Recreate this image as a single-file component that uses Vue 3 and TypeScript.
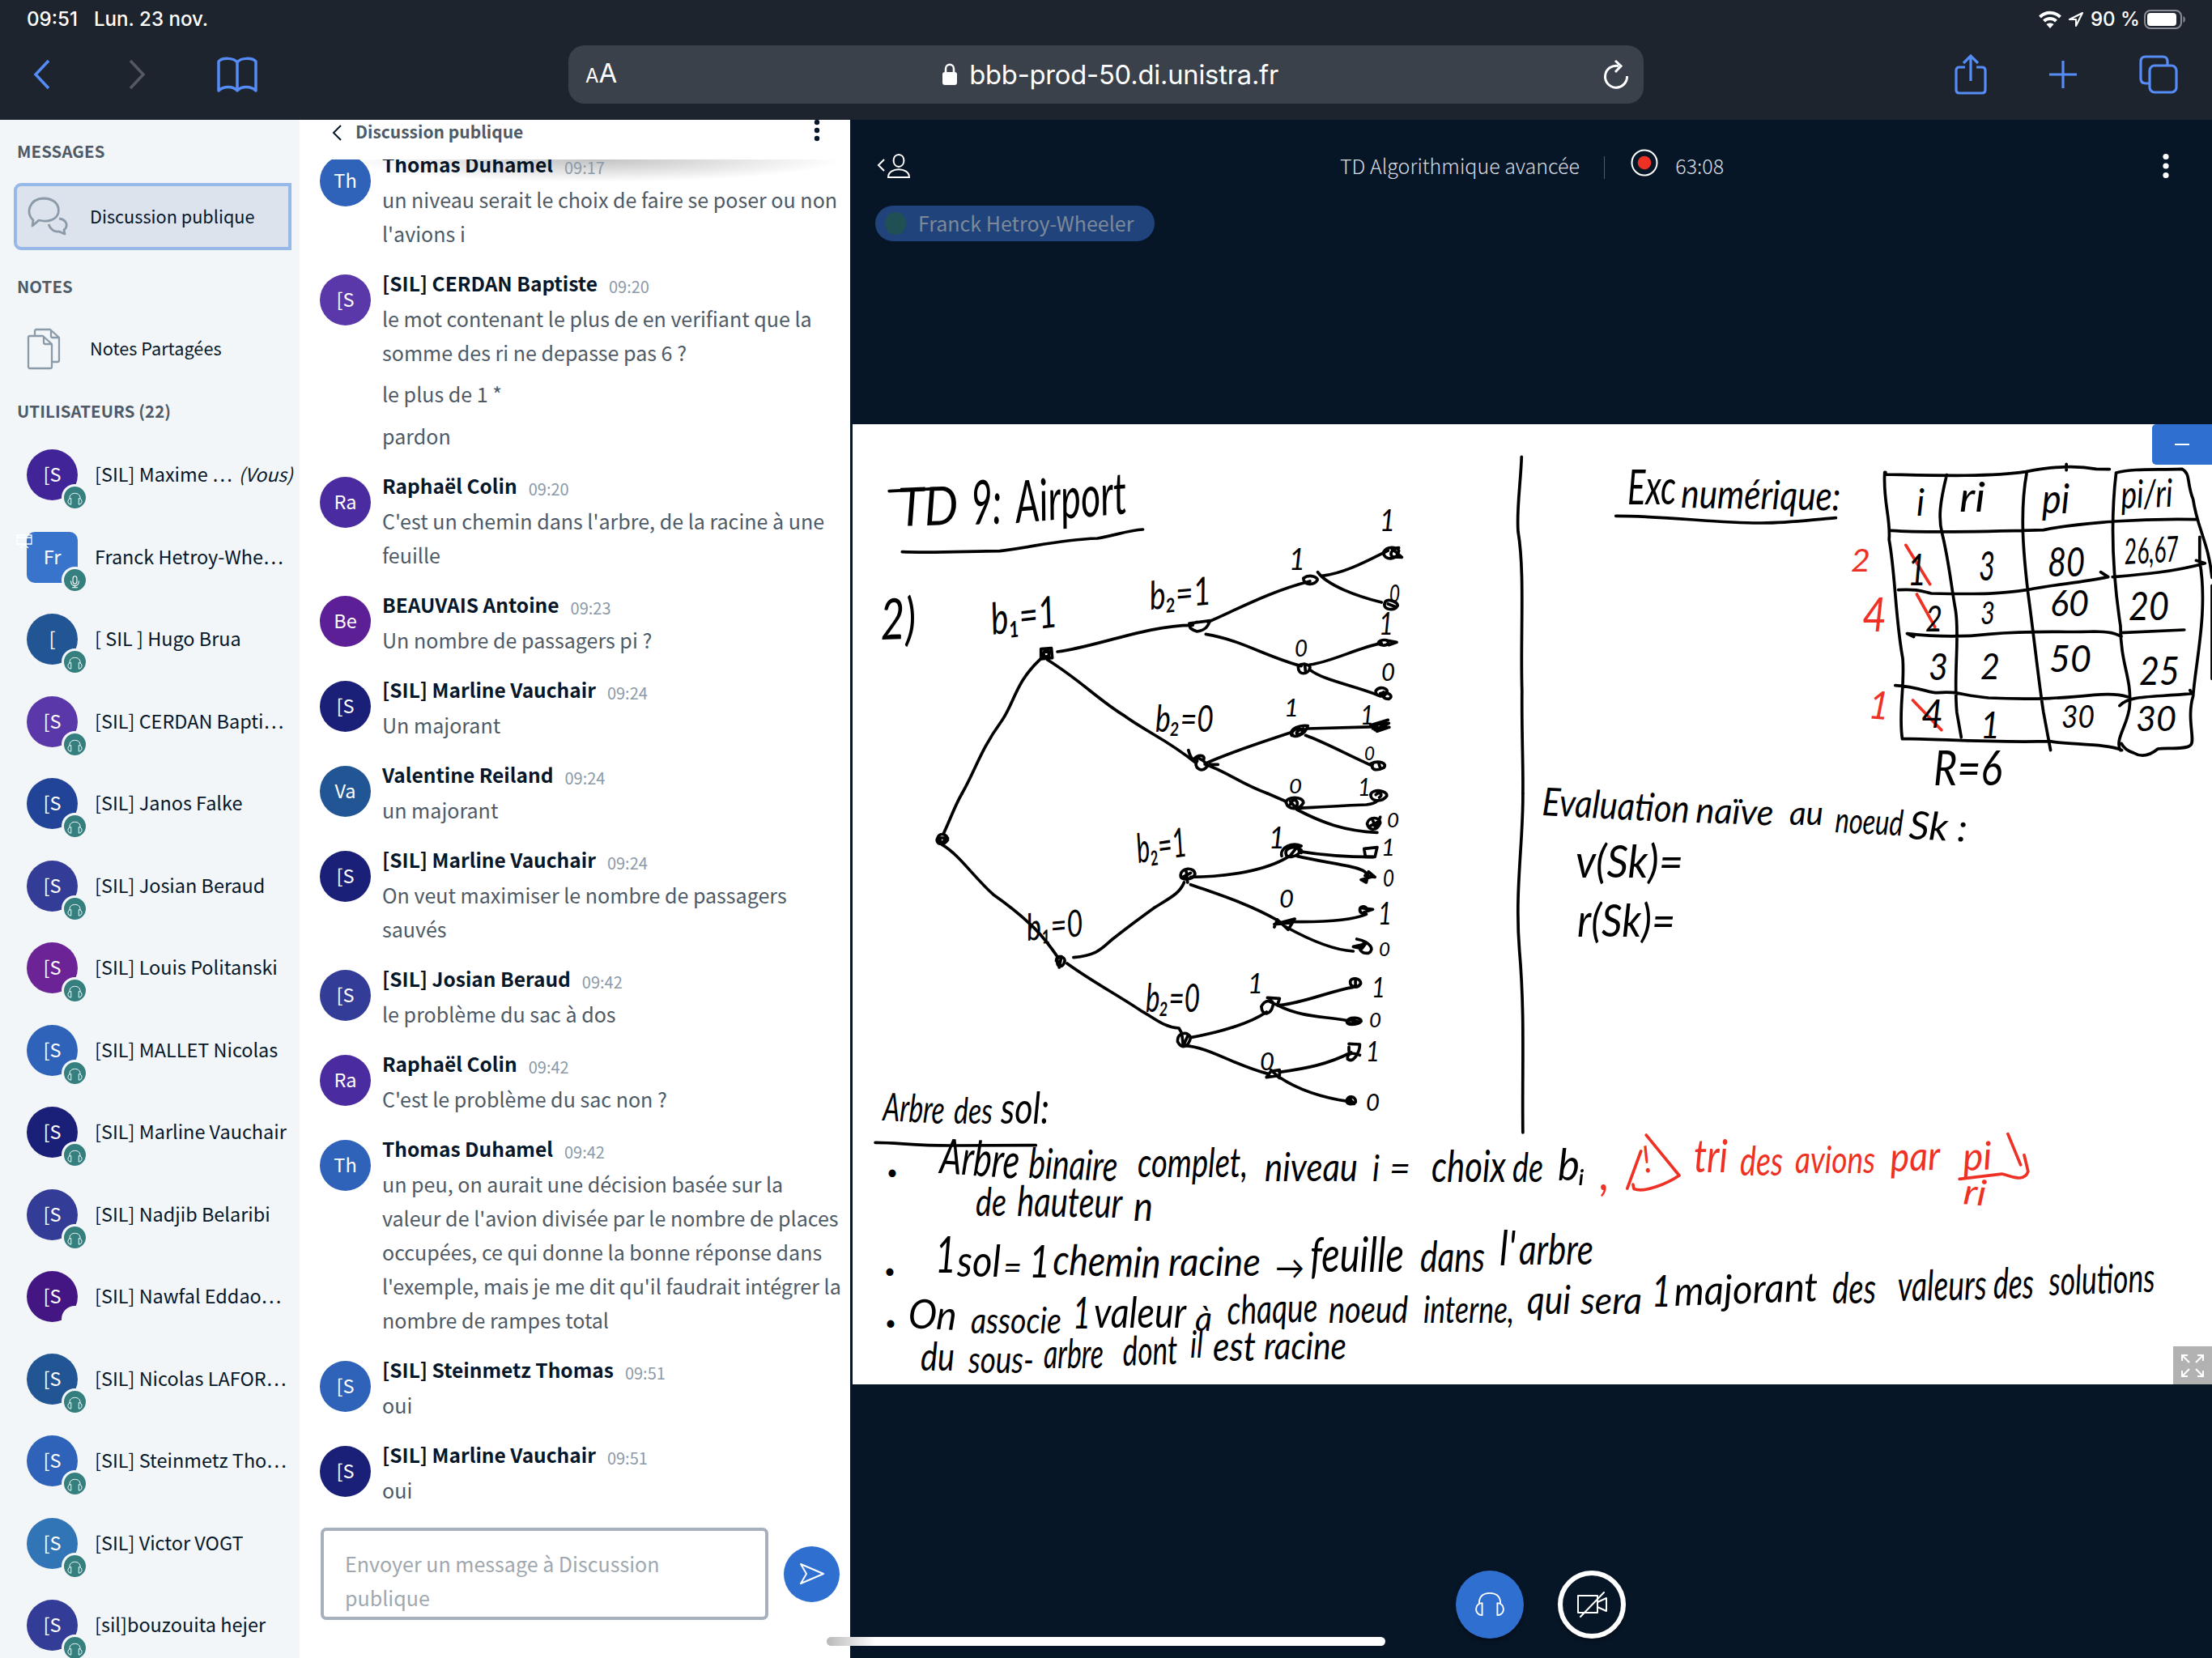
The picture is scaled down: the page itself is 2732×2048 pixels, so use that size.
<script setup lang="ts">
interface User { initials: string; name: string; color: string; badge: 'phones' | 'mic' | 'none'; you?: boolean; presenter?: boolean }
interface Message { initials: string; name: string; time: string; color: string; paragraphs: string[][] }
interface Note { t: string; x: number; y: number; w: number; s: number; r?: number; red?: boolean }

const users: User[] = [
  { initials: '[S', name: '[SIL] Maxime …', color: '#412598', badge: 'phones', you: true },
  { initials: 'Fr', name: 'Franck Hetroy-Whe…', color: '#3874cb', badge: 'mic', presenter: true },
  { initials: '[', name: '[ SIL ] Hugo Brua', color: '#225594', badge: 'phones' },
  { initials: '[S', name: '[SIL] CERDAN Bapti…', color: '#5a38a9', badge: 'phones' },
  { initials: '[S', name: '[SIL] Janos Falke', color: '#214498', badge: 'phones' },
  { initials: '[S', name: '[SIL] Josian Beraud', color: '#333c96', badge: 'phones' },
  { initials: '[S', name: '[SIL] Louis Politanski', color: '#6b2396', badge: 'phones' },
  { initials: '[S', name: '[SIL] MALLET Nicolas', color: '#2e63b9', badge: 'phones' },
  { initials: '[S', name: '[SIL] Marline Vauchair', color: '#1a2078', badge: 'phones' },
  { initials: '[S', name: '[SIL] Nadjib Belaribi', color: '#333c96', badge: 'phones' },
  { initials: '[S', name: '[SIL] Nawfal Eddao…', color: '#431684', badge: 'none' },
  { initials: '[S', name: '[SIL] Nicolas LAFOR…', color: '#225594', badge: 'phones' },
  { initials: '[S', name: '[SIL] Steinmetz Tho…', color: '#2e63b9', badge: 'phones' },
  { initials: '[S', name: '[SIL] Victor VOGT', color: '#3275b6', badge: 'phones' },
  { initials: '[S', name: '[sil]bouzouita hejer', color: '#333c96', badge: 'phones' },
]

const messages: Message[] = [
  { initials: 'Th', name: 'Thomas Duhamel', time: '09:17', color: '#2e63b9', paragraphs: [['un niveau serait le choix de faire se poser ou non', "l'avions i"]] },
  { initials: '[S', name: '[SIL] CERDAN Baptiste', time: '09:20', color: '#5a38a9', paragraphs: [['le mot contenant le plus de en verifiant que la', 'somme des ri ne depasse pas 6 ?'], ['le plus de 1 *'], ['pardon']] },
  { initials: 'Ra', name: 'Raphaël Colin', time: '09:20', color: '#4b2ca0', paragraphs: [["C'est un chemin dans l'arbre, de la racine à une", 'feuille']] },
  { initials: 'Be', name: 'BEAUVAIS Antoine', time: '09:23', color: '#5d1f95', paragraphs: [['Un nombre de passagers pi ?']] },
  { initials: '[S', name: '[SIL] Marline Vauchair', time: '09:24', color: '#1a2078', paragraphs: [['Un majorant']] },
  { initials: 'Va', name: 'Valentine Reiland', time: '09:24', color: '#225594', paragraphs: [['un majorant']] },
  { initials: '[S', name: '[SIL] Marline Vauchair', time: '09:24', color: '#1a2078', paragraphs: [['On veut maximiser le nombre de passagers', 'sauvés']] },
  { initials: '[S', name: '[SIL] Josian Beraud', time: '09:42', color: '#333c96', paragraphs: [['le problème du sac à dos']] },
  { initials: 'Ra', name: 'Raphaël Colin', time: '09:42', color: '#4b2ca0', paragraphs: [["C'est le problème du sac non ?"]] },
  { initials: 'Th', name: 'Thomas Duhamel', time: '09:42', color: '#2e63b9', paragraphs: [['un peu, on aurait une décision basée sur la', "valeur de l'avion divisée par le nombre de places", 'occupées, ce qui donne la bonne réponse dans', "l'exemple, mais je me dit qu'il faudrait intégrer la", 'nombre de rampes total']] },
  { initials: '[S', name: '[SIL] Steinmetz Thomas', time: '09:51', color: '#2e63b9', paragraphs: [['oui']] },
  { initials: '[S', name: '[SIL] Marline Vauchair', time: '09:51', color: '#1a2078', paragraphs: [['oui']] },
]

// Whiteboard writing: x, baseline, width, size and tilt in board units
const n = (t: string, x: number, y: number, w: number, s: number, r = 0, red = false): Note => ({ t, x, y, w, s, r, red })
const notes: Note[] = [
  n('TD', 1110, 650, 74, 66, -2), n('9:', 1200, 648, 38, 76, -2), n('Airport', 1256, 646, 138, 72, -5),
  n('2)', 1088, 790, 44, 70, -2),
  n('b₁=1', 1226, 784, 82, 54, -7), n('b₂=1', 1421, 753, 76, 48, -5), n('b₂=0', 1427, 904, 72, 46), n('b₂=1', 1406, 1066, 62, 50, -8), n('b₁=0', 1269, 1162, 70, 46, -5), n('b₂=0', 1415, 1250, 67, 48),
  n('1', 1592, 704, 20, 36), n('0', 1599, 811, 16, 28), n('1', 1586, 885, 18, 30), n('0', 1592, 980, 16, 26),
  n('1', 1567, 1048, 20, 36), n('0', 1580, 1121, 18, 30), n('1', 1541, 1227, 19, 34), n('0', 1556, 1322, 18, 30),
  n('1', 1704, 656, 19, 36), n('0', 1716, 744, 13, 30), n('1', 1703, 784, 18, 38), n('0', 1706, 841, 17, 30), n('1', 1680, 895, 17, 32), n('0', 1685, 939, 13, 24), n('1', 1677, 983, 16, 30), n('0', 1713, 1022, 15, 26),
  n('1', 1706, 1057, 17, 28), n('0', 1708, 1095, 14, 28), n('1', 1702, 1142, 17, 38), n('0', 1703, 1181, 14, 24), n('1', 1694, 1232, 17, 34), n('0', 1691, 1269, 15, 26), n('1', 1687, 1311, 17, 34), n('0', 1687, 1372, 17, 28),
  n('Exc', 2010, 623, 60, 60), n('numérique:', 2076, 627, 197, 50, 1),
  n('i', 2367, 637, 10, 46), n('ri', 2420, 632, 32, 50), n('pi', 2522, 634, 34, 50), n('pi/ri', 2620, 628, 64, 48, -2),
  n('1', 2356, 723, 23, 54), n('3', 2444, 717, 20, 50), n('80', 2529, 712, 46, 50), n('26,67', 2624, 697, 68, 44, -3),
  n('2', 2378, 780, 21, 44), n('3', 2446, 771, 18, 38), n('60', 2532, 761, 48, 44), n('20', 2629, 766, 50, 48),
  n('3', 2382, 840, 24, 46), n('2', 2446, 839, 24, 44), n('50', 2531, 830, 52, 46), n('25', 2642, 846, 50, 48),
  n('4', 2373, 899, 27, 48), n('1', 2446, 912, 24, 46), n('30', 2546, 899, 41, 38), n('30', 2638, 903, 50, 42),
  n('2', 2286, 706, 24, 38, 0, true), n('4', 2300, 780, 30, 58, 0, true), n('1', 2307, 887, 25, 48, 5, true),
  n('R=6', 2388, 970, 85, 60),
  n('Evaluation', 1904, 1007, 182, 48, 3), n('naïve', 2094, 1016, 96, 44, 2), n('au', 2210, 1019, 42, 40), n('noeud', 2266, 1028, 84, 44, 3), n('Sk :', 2357, 1036, 72, 48, 3),
  n('v(Sk)=', 1946, 1084, 133, 56), n('r(Sk)=', 1948, 1157, 121, 56),
  n('Arbre', 1090, 1384, 76, 48, 3), n('des', 1178, 1388, 48, 44), n('sol:', 1236, 1388, 60, 54),
  n('Arbre', 1160, 1449, 98, 60, 4), n('binaire', 1270, 1455, 110, 52, 2), n('complet,', 1405, 1454, 136, 50), n('niveau', 1562, 1459, 115, 48), n('i', 1695, 1459, 9, 44), n('=', 1716, 1459, 26, 46), n('choix', 1768, 1460, 92, 54), n('de', 1868, 1460, 38, 50), n('bᵢ', 1924, 1458, 34, 54),
  n(',', 1976, 1470, 12, 60, 0, true), n('tri', 2092, 1448, 42, 56, 0, true), n('des', 2149, 1452, 53, 50, 0, true), n('avions', 2217, 1449, 99, 46, 0, true), n('par', 2335, 1447, 62, 50, -2, true), n('pi', 2425, 1446, 36, 48, -3, true), n('ri', 2424, 1487, 28, 44, 5, true), n('!', 2032, 1449, 10, 46, -12, true),
  n('de', 1205, 1502, 38, 48), n('hauteur', 1256, 1502, 130, 52, 1), n('n', 1400, 1508, 24, 50),
  n('1', 1155, 1572, 26, 62), n('sol', 1182, 1577, 54, 54), n('=', 1239, 1580, 23, 42), n('1', 1271, 1578, 26, 56), n('chemin', 1300, 1574, 133, 52, 2), n('racine', 1443, 1576, 114, 48), n('→', 1575, 1580, 36, 40), n('feuille', 1618, 1571, 116, 60), n('dans', 1754, 1571, 80, 52), n("l'", 1852, 1563, 20, 60), n('arbre', 1876, 1562, 92, 52),
  n('•', 1095, 1457, 14, 26), n('•', 1092, 1579, 14, 26), n('•', 1093, 1643, 14, 26),
  n('On', 1121, 1640, 60, 50, 3), n('associe', 1199, 1647, 112, 44), n('1', 1325, 1641, 22, 54), n('valeur', 1351, 1640, 114, 52), n('à', 1476, 1644, 21, 42), n('chaque', 1516, 1636, 112, 50, -2), n('noeud', 1641, 1634, 98, 46), n('interne,', 1758, 1634, 112, 46),
  n('qui', 1886, 1623, 54, 48), n('sera', 1952, 1623, 76, 46), n('1', 2040, 1614, 24, 54), n('majorant', 2068, 1613, 178, 50, -2), n('des', 2263, 1610, 54, 52), n('valeurs', 2344, 1607, 110, 52, -1), n('des', 2462, 1604, 50, 52), n('solutions', 2531, 1600, 131, 50, -2),
  n('du', 1137, 1693, 42, 48), n('sous-', 1196, 1696, 81, 46), n('arbre', 1289, 1690, 74, 50), n('dont', 1387, 1687, 68, 50, -2), n('il', 1470, 1677, 16, 46), n('est', 1498, 1681, 53, 50), n('racine', 1561, 1679, 102, 46),
]
</script>

<template>
  <div class="screen">
    <svg width="0" height="0" class="defs">
      <symbol id="phones" viewBox="0 0 40 34"><path d="M6 16 C6 6 12 2 20 2 C28 2 34 6 34 16 M10 15 V31 C5 31 2 27 2 23 C2 19 5 15 10 15 Z M30 15 V31 C35 31 38 27 38 23 C38 19 35 15 30 15 Z" fill="none" stroke="currentColor" stroke-width="2" stroke-linejoin="round" /></symbol>
      <symbol id="mic" viewBox="0 0 24 28"><path d="M8 7 a4 4 0 0 1 8 0 v7 a4 4 0 0 1 -8 0 Z M4 13 c0 12 16 12 16 0 M12 22 v4 M7 26 h10" fill="none" stroke="currentColor" stroke-width="1.8" stroke-linecap="round" /></symbol>
    </svg>

    <header class="browser">
      <div class="status">
        <span class="clock">09:51</span><span class="date">Lun. 23 nov.</span>
        <div class="status-right">
          <svg class="wifi" width="28" height="22" viewBox="0 0 28 22" fill="none" stroke="#fff" stroke-width="4"><path d="M1.500 8 C8.500 1 19.500 1 26.500 8 M6.500 13 C10.500 9 17.500 9 21.500 13" /><path d="M14 22 L9.500 17 C12 15 16 15 18.500 17 Z" fill="#fff" stroke="none" /></svg>
          <svg class="loc" width="20" height="20" viewBox="0 0 20 20" fill="none" stroke="#fff" stroke-width="2" stroke-linejoin="round"><path d="M18 2 L2 10 H10 V18 Z" /></svg>
          <span class="pct">90 %</span>
          <svg width="52" height="26" viewBox="0 0 52 26"><rect x="1" y="2" width="45" height="22" rx="7" fill="none" stroke="#8a8d93" stroke-width="2" /><rect x="4" y="5" width="36" height="16" rx="4" fill="#fff" /><path d="M48.500 9 C51.500 10 51.500 16 48.500 17 Z" fill="#8a8d93" /></svg>
        </div>
      </div>
      <div class="toolbar">
        <svg class="nav-back" width="24" height="40" viewBox="0 0 24 40"><path d="M20 3 L4 20 L20 37" /></svg>
        <svg class="nav-next" width="24" height="40" viewBox="0 0 24 40"><path d="M4 3 L20 20 L4 37" /></svg>
        <svg class="book" width="50" height="46" viewBox="0 0 50 46"><path d="M25 7 C21 1 6 1 2 6 V42 C8 36 20 36 25 42 C30 36 42 36 48 42 V6 C44 1 29 1 25 7 V42" /></svg>
        <div class="address">
          <span class="aa"><small>A</small>A</span>
          <div class="url">
            <svg width="20" height="28" viewBox="0 0 20 28"><rect x="1" y="11" width="18" height="16" rx="3" fill="#fff" /><path d="M5 12 V7 C5 0 15 0 15 7 V12" fill="none" stroke="#fff" stroke-width="2.500" /></svg>
            <span>bbb-prod-50.di.unistra.fr</span>
          </div>
          <svg class="reload" width="34" height="38" viewBox="0 0 34 38"><path d="M29.500 21 A13.500 13.500 0 1 1 19 8.500 M15 2 L22 8.500 L15 16" /></svg>
        </div>
        <div class="actions">
          <svg width="40" height="52" viewBox="0 0 40 52"><path d="M13 17 H6 C3.500 17 2 18.500 2 21 V45 C2 47.500 3.500 49 6 49 H34 C36.500 49 38 47.500 38 45 V21 C38 18.500 36.500 17 34 17 H27 M20 34 V3 M11 12 L20 3 L29 12" /></svg>
          <svg width="38" height="38" viewBox="0 0 38 38"><path d="M19 2 V36 M2 19 H36" /></svg>
          <svg width="48" height="48" viewBox="0 0 48 48"><rect x="13" y="13" width="33" height="33" rx="6" /><path d="M13 35 H8 C4 35 2 33 2 29 V8 C2 4 4 2 8 2 H29 C33 2 35 4 35 8 V13" /></svg>
        </div>
      </div>
    </header>

    <main class="app">
      <aside class="side">
        <h2 class="first">MESSAGES</h2>
        <div class="item selected">
          <svg width="50" height="50" viewBox="0 0 50 50"><path d="M7 29 C-3 19 3 3 19 2 C32 2 40 9 38 20 C36 28 26 32 14 29 L6 36 Z M39 27 C48 28 51 36 45 41 L46 46 L39 43 C33 44 28 40 26 34" /></svg>
          <span>Discussion publique</span>
        </div>
        <h2 class="notes">NOTES</h2>
        <div class="item">
          <svg class="pages" width="42" height="52" viewBox="0 0 42 52"><path d="M4 10 H20 L31 20 V48 Q31 50 29 50 H4 Q2 50 2 48 V12 Q2 10 4 10 Z M21 11 V18 Q21 20 23 20 H30 M10 10 V4 Q10 2 12 2 H29 L40 12 V40 Q40 42 38 42 H32 M30 3 V10 Q30 12 32 12 H39" /></svg>
          <span>Notes Partagées</span>
        </div>
        <h2 class="people">UTILISATEURS (22)</h2>
        <ul>
          <li v-for="u in users" :key="u.name">
            <div class="avatar" :class="{ square: u.presenter }" :style="{ background: u.color }">
              <b>{{ u.initials }}</b>
              <svg v-if="u.presenter" class="board-mark" width="20" height="20" viewBox="0 0 20 20"><path d="M1 2 H19 V13 H1 Z M1 5 H19 M10 13 L5 18 M10 13 L15 18" /></svg>
              <i class="badge" :class="u.badge"><svg v-if="u.badge !== 'none'"><use :href="'#' + u.badge" /></svg></i>
            </div>
            <span class="uname">{{ u.name }}</span><em v-if="u.you">(Vous)</em>
          </li>
        </ul>
      </aside>

      <section class="chat">
        <div class="chat-head">
          <svg width="14" height="22" viewBox="0 0 14 22"><path d="M12 2 L3 11 L12 20" fill="none" stroke="#06172a" stroke-width="2" /></svg>
          <span>Discussion publique</span>
          <svg class="dots" width="8" height="30" viewBox="0 0 8 30" fill="#06172a"><circle cx="4" cy="4" r="3.200" /><circle cx="4" cy="14" r="3.200" /><circle cx="4" cy="24" r="3.200" /></svg>
        </div>
        <div class="log">
          <article v-for="(m, i) in messages" :key="i">
            <div class="avatar" :style="{ background: m.color }"><b>{{ m.initials }}</b></div>
            <div class="body">
              <div class="who"><b>{{ m.name }}</b><time>{{ m.time }}</time></div>
              <p v-for="(p, j) in m.paragraphs" :key="j"><span v-for="line in p" :key="line">{{ line }}</span></p>
            </div>
          </article>
        </div>
        <div class="compose">
          <div class="input"><span>Envoyer un message à Discussion</span><span>publique</span></div>
          <button><svg width="34" height="30" viewBox="0 0 34 30"><path d="M3 3 L31 15 L3 27 L10 15 Z" fill="none" stroke="#fff" stroke-width="2" stroke-linejoin="round" /></svg></button>
        </div>
      </section>

      <section class="stage">
        <div class="stage-head">
          <svg class="toggle" width="42" height="34" viewBox="0 0 42 34"><path d="M9 9 L2 16 L9 23 M27 3 C35 3 36 17 27 18 C18 17 19 3 27 3 Z M14 31 C14 18 40 18 40 31 Z" /></svg>
          <div class="title">
            <span class="room">TD Algorithmique avancée</span><i></i>
            <svg width="34" height="34" viewBox="0 0 34 34"><circle cx="17" cy="17" r="15.500" fill="none" stroke="#fff" stroke-width="2" /><circle cx="17" cy="17" r="8.300" fill="#ee3124" /></svg>
            <span class="timer">63:08</span>
          </div>
          <svg class="more" width="8" height="32" viewBox="0 0 8 32" fill="#fff"><circle cx="4" cy="4.500" r="3.600" /><circle cx="4" cy="16" r="3.600" /><circle cx="4" cy="27.500" r="3.600" /></svg>
        </div>
        <div class="talking"><i></i><span>Franck Hetroy-Wheeler</span></div>

        <div class="board">
          <svg class="ink" width="1679" height="1186" viewBox="1053 524 1679 1186">
            <g class="strokes">
              <g transform="translate(1050 520) scale(.5357 .33333)">
                <path d="M120 485 C200 490 280 482 345 482 C430 465 480 440 570 435 C610 425 640 405 675 402 M90 260 L195 251" />
                <path d="M1548 133 C1546 230 1536 330 1540 410 C1556 560 1545 800 1549 1000 C1548 1150 1552 1280 1551 1380" />
                <path d="M478 855 C560 840 690 755 790 757 M440 880 C380 970 380 1040 350 1110 C300 1220 290 1290 258 1380 M455 885 C530 960 570 1030 630 1090 C680 1150 730 1180 795 1265 M825 745 C890 700 970 630 1060 594 M820 790 C900 810 960 875 1040 908 M1088 574 C1140 564 1190 520 1240 480 M1078 560 C1100 610 1170 650 1225 672 M1060 903 C1110 893 1170 840 1225 824 M1060 922 C1090 960 1160 980 1215 1015 M818 1270 C880 1225 950 1190 1015 1155 M1055 1140 L1215 1133 M1050 1165 C1100 1195 1150 1240 1200 1275 M818 1272 C870 1300 900 1345 962 1380 M830 1273 H848 M780 1220 C785 1250 790 1255 798 1262" />
                <path d="M440 845 L464 842 L466 878 L440 882 Z M447 856 L458 853 L458 872 L446 874 Z M782 750 L830 740 C825 760 820 775 800 780 C780 770 775 755 800 745 M1045 583 C1060 565 1080 580 1077 590 C1070 610 1045 610 1045 583 Z M1230 485 C1240 460 1262 470 1265 480 C1262 520 1230 515 1230 490 M1247 470 L1272 505 L1250 503 C1242 490 1252 470 1265 470 M1232 680 C1232 650 1265 670 1262 685 C1255 705 1230 700 1232 680 Z M1240 678 L1256 688 M1218 822 C1220 810 1245 805 1240 825 C1235 835 1220 832 1218 822 M1240 814 L1260 820 L1242 830 M1033 912 C1035 895 1062 900 1060 915 C1057 940 1033 945 1033 912 Z M1048 900 L1050 930 M1212 1000 C1220 980 1240 990 1238 1005 C1230 1030 1210 1020 1212 1000 M1222 1010 C1240 1000 1255 1020 1242 1030 C1230 1030 1225 1020 1230 1005 M1018 1165 C1010 1140 1040 1125 1055 1130 C1050 1160 1020 1185 1018 1155 C1030 1130 1050 1140 1040 1160 C1025 1165 1025 1150 1045 1140 M1210 1145 L1242 1120 L1200 1127 L1240 1108 M1205 1140 L1243 1135 L1215 1150 M1200 1270 C1220 1255 1240 1270 1230 1285 C1210 1300 1200 1290 1205 1270 M1218 1265 L1222 1285 M792 1255 C800 1235 820 1235 815 1255 M800 1260 C790 1280 810 1310 823 1280 C820 1260 800 1240 792 1255" />
              </g>
              <g transform="translate(1050 960) scale(.5357 .33333)">
                <path d="M258 60 C240 110 230 160 215 210 M212 250 C250 285 285 370 330 435 C370 480 400 520 425 560 C450 600 465 635 480 670 M500 690 C560 760 620 810 670 865 C700 890 720 925 758 930 L765 950 M515 668 C570 660 580 635 605 600 C640 555 670 520 700 485 C740 445 760 430 770 390 M962 60 L1005 90 M1035 115 C1090 110 1140 105 1190 102 Q1210 98 1215 88 M1030 120 C1090 170 1140 200 1215 205 M785 370 C870 370 960 345 1010 295 M785 398 C850 435 920 470 985 530 M1035 275 Q1110 295 1205 296 M1030 292 C1100 320 1190 330 1190 360 M1005 535 C1080 538 1150 535 1190 508 M1005 555 C1050 595 1110 640 1160 645 M785 965 C850 945 920 915 960 870 M770 995 C830 1000 880 1065 965 1100 M990 845 C1050 835 1100 795 1160 778 M985 845 C1040 890 1090 885 1150 903 M990 1093 C1050 1080 1100 1065 1155 1020 M990 1112 C1030 1155 1080 1185 1150 1202" />
                <path d="M1551 60 C1552 240 1532 420 1543 640 C1556 880 1549 1080 1551 1317" />
                <path d="M200 232 C205 200 225 210 225 232 C215 255 200 250 200 232 M205 225 H225 L210 245 Z M475 680 C475 655 495 665 495 680 C490 710 475 705 478 680 M487 665 L482 705 M762 365 C760 335 795 330 795 360 C790 380 762 385 762 365 M775 350 L778 390 M765 372 L785 355 M755 975 C755 945 780 940 785 965 C780 1000 765 1010 755 980 M765 955 L768 995 L778 960 M1005 95 C1005 70 1045 70 1045 95 C1035 125 1010 120 1005 95 M1015 100 C1020 75 1035 85 1030 105 M1015 90 L1030 118 M1200 65 C1205 40 1240 50 1237 70 C1225 95 1200 90 1200 65 M1212 65 C1220 50 1230 65 1220 75 M1192 172 C1195 145 1222 145 1222 170 C1215 200 1195 200 1192 172 M1205 160 L1212 190 L1222 148 M1200 180 L1218 165 M995 292 C990 260 1020 240 1040 255 M1005 285 C1000 260 1030 250 1040 270 C1030 300 1005 300 1005 285 M1015 290 L1030 260 L1040 280 M1185 265 L1188 295 L1210 295 L1215 260 Z M1187 365 L1210 370 L1195 350 L1190 390 L1178 380 L1205 368 M978 555 L985 528 L1010 565 L1025 525 L978 545 L1015 540 M1175 490 C1175 475 1195 475 1190 495 C1185 512 1175 505 1175 490 M1180 485 L1205 490 L1185 500 M1168 600 C1200 610 1210 640 1195 652 C1180 655 1165 635 1185 615 M1160 628 L1188 618 L1180 635 Z M1153 760 C1153 740 1178 742 1177 765 C1170 785 1153 778 1153 760 M1165 750 V772 M948 850 C955 825 978 820 975 845 C970 880 950 890 948 850 M962 817 L990 820 L985 845 L965 830 M1145 905 C1150 885 1180 890 1178 905 C1170 920 1145 920 1145 905 M1155 900 L1175 908 M1150 912 H1170 M1150 988 L1175 990 C1175 1020 1160 1060 1147 1045 C1145 1020 1160 1020 1175 1030 M1150 1000 V1015 M960 1112 L970 1090 L990 1085 V1105 L960 1112 M970 1085 L990 1115 M1145 1200 C1145 1178 1168 1180 1165 1205 C1158 1215 1145 1212 1145 1200 M1150 1190 L1162 1210 M1155 1185 L1150 1210" />
              </g>
              <g transform="translate(1880 520) scale(.54337 .33333)">
                <path d="M213 352 C330 352 450 380 545 378 C610 378 660 365 713 359" />
                <path d="M826 190 V198 C900 200 1060 210 1145 188 C1200 170 1260 165 1305 178 L1335 179 M1237 160 V182 M1350 192 C1390 175 1440 182 1500 178 C1520 195 1510 230 1525 290 C1535 400 1560 450 1568 580 M824 190 C820 300 838 360 834 440 C848 560 848 730 865 880 C870 980 855 1080 864 1178 M965 200 C950 300 945 360 955 420 C970 520 975 610 985 700 C995 800 980 940 988 1080 L998 1172 M1147 190 C1130 340 1140 500 1150 640 C1165 820 1175 980 1185 1080 L1201 1220 M1350 192 C1335 400 1345 600 1360 760 C1360 900 1385 950 1381 1050 C1380 1120 1345 1180 1360 1220 M1568 955 V610 M1540 430 V520 C1560 700 1530 900 1525 1020 C1510 1100 1530 1180 1520 1200 C1510 1220 1460 1210 1445 1215 C1430 1235 1410 1250 1390 1230 Q1370 1220 1362 1195 M838 406 C920 415 1060 410 1185 404 C1240 385 1290 380 1345 372 Q1440 362 1532 365 M855 626 C900 622 910 632 930 639 C1050 643 1090 640 1150 625 C1210 605 1270 600 1332 578 L1315 560 M1342 578 C1400 570 1480 560 1552 527 L1532 517 M890 800 L875 788 C940 800 1010 800 1060 790 C1170 775 1220 785 1300 780 C1340 780 1350 790 1362 798 M1360 785 L1505 774 M848 980 C900 985 930 1010 945 1007 C990 1000 1000 1018 1060 1026 C1170 1035 1240 1025 1300 1015 Q1350 1008 1376 1022 M1358 1055 C1380 1015 1430 1025 1522 1010 L1518 998 M864 1177 C950 1178 1060 1193 1200 1187 C1240 1200 1330 1195 1363 1220" />
                <path class="red" d="M872 460 L927 605 M897 642 L938 763 M888 1035 L953 1145" />
              </g>
              <g transform="translate(1050 1340) scale(.5357 .33333)"><path d="M58 214 C110 214 150 226 240 225 L428 224" /></g>
              <g transform="translate(1880 960) scale(.54337 .48472)"><path class="red" d="M270 953 L239 1048 M282 912 L357 1015 C330 1035 280 1060 254 1049 L252 1038 M994 1024 L1090 1011 C1110 1015 1140 1035 1150 1005 Q1146 985 1141 963 M1104 909 L1133 988" /></g>
            </g>
            <g class="script">
              <text v-for="(w, i) in notes" :key="i" :x="w.x" :y="w.y" :font-size="w.s" :textLength="w.w" lengthAdjust="spacingAndGlyphs" :transform="`rotate(${w.r} ${w.x} ${w.y})`" :class="{ red: w.red }">{{ w.t }}</text>
            </g>
          </svg>
          <button class="minimize"><i></i></button>
          <button class="expand"><svg width="30" height="30" viewBox="0 0 30 30"><path d="M2 9 V2 H9 M2 2 L11 11 M21 2 H28 V9 M28 2 L19 11 M2 21 V28 H9 M2 28 L11 19 M28 21 V28 H21 M28 28 L19 19" /></svg></button>
        </div>

        <div class="controls">
          <button class="audio"><svg width="38" height="32"><use href="#phones" /></svg></button>
          <button class="camera"><svg width="40" height="32" viewBox="0 0 40 32"><path d="M3 5 H27 V26 H3 Z M27 13 L38 8 V24 L27 19 M6 31 L35 1" /></svg></button>
        </div>
      </section>
    </main>
    <div class="home-bar"></div>
  </div>
</template>

<style>
body { margin: 0; overflow: hidden; }
</style>

<style scoped>
* { box-sizing: border-box; }
.screen { position: relative; width: 2732px; height: 2048px; overflow: hidden; background: #071627; font-family: "Noto Sans CJK SC", "Noto Sans", sans-serif; display: flex; flex-direction: column; }
.defs { position: absolute; }
svg { display: block; flex: none; }
button { border: 0; padding: 0; display: flex; align-items: center; justify-content: center; }
h2, ul, p { margin: 0; padding: 0; }

.browser { height: 148px; flex: none; background: #1e242e; color: #fff; font-family: Inter, "Liberation Sans", sans-serif; }
.status { height: 48px; display: flex; align-items: center; padding: 0 32px 0 33px; font-size: 24.100px; font-weight: 500; line-height: 48px; }
.date { margin-left: 20px; }
.status-right { margin-left: auto; display: flex; align-items: center; }
.loc { margin-left: 8px; }
.pct { margin: 0 5px 0 8px; }
.toolbar { height: 88px; display: flex; align-items: center; padding-left: 40px; fill: none; stroke: #568cf5; stroke-width: 3.500; }
.nav-next { margin-left: 93px; stroke: #555a62; }
.book { margin-left: 87px; margin-top: 2px; stroke-linejoin: round; }
.address { width: 1328px; height: 72px; margin-left: 384px; border-radius: 20px; background: #3b414b; display: flex; align-items: center; padding: 0 16px 0 21px; }
.aa { font-size: 33px; line-height: 40px; stroke: none; }
.aa small { font-size: 24px; }
.url { display: flex; align-items: center; gap: 14px; margin: 0 auto; font-size: 32.700px; letter-spacing: -.2px; stroke: none; }
.reload { stroke: #fff; stroke-width: 3; }
.actions { margin-left: auto; display: flex; align-items: center; padding-right: 42px; stroke-width: 3.200; }
.actions svg + svg { margin-left: 75px; }

.app { display: flex; flex: 1; min-height: 0; }
.side { width: 370px; background: #f2f6f9; color: #06172a; flex: none; overflow: hidden; font-size: 23.450px; }
.side h2 { font-size: 20.400px; font-weight: 600; color: #4e5a66; line-height: 30px; padding-left: 21px; letter-spacing: .1px; position: relative; top: -1px; }
.first { margin-top: 24px; }
.item { height: 83px; margin-left: 17px; width: 343px; display: flex; align-items: center; padding-left: 17px; font-size: 21.700px; }
.item svg { fill: none; stroke: #8b9aa8; stroke-width: 2.800; stroke-linejoin: round; }
.item span { margin-left: 27px; padding-bottom: 3px; }
.item .pages + span { margin-left: 35px; }
.pages { stroke-width: 2.300 !important; position: relative; left: -1px; }
.selected { margin-top: 24px; padding-left: 13px; border: 4px solid #97b9e7; border-radius: 9px 0 0 9px; background: #dde3ec; }
.side .notes { margin-top: 30px; margin-bottom: 20px; }
.side .people { margin-top: 21px; }
ul { list-style: none; margin-top: 13px; }
li { height: 101.500px; display: flex; align-items: center; padding-left: 33px; white-space: nowrap; }
.avatar { width: 63px; height: 63px; border-radius: 50%; color: #fff; display: flex; align-items: center; justify-content: center; flex: none; position: relative; font-size: 23.500px; line-height: 30px; }
.avatar b { font-weight: 400; padding-bottom: 3px; }
.square { border-radius: 10px; }
.badge { position: absolute; left: 43px; top: 43px; width: 33px; height: 33px; border-radius: 50%; border: 3px solid #f2f6f9; background: #367f7f; display: flex; align-items: center; justify-content: center; color: #fff; }
.badge svg { width: 19px; height: 17px; position: relative; top: 2px; }
.badge.none { background: #f2f6f9; }
.board-mark { position: absolute; left: -13px; top: 2px; fill: none; stroke: #fff; stroke-width: 1.300; }
.uname { margin-left: 21px; padding-bottom: 3px; }
li em { margin-left: 8px; padding-bottom: 3px; font-size: 23px; }

.chat { width: 680px; flex: none; background: #fff; display: flex; flex-direction: column; }
.chat-head { height: 49px; flex: none; display: flex; align-items: flex-start; padding-left: 39px; }
.chat-head > svg:first-child { margin-top: 5px; }
.chat-head span { margin-left: 16px; margin-top: -1px; font-size: 21px; line-height: 30px; font-weight: 600; color: #4e5a66; }
.dots { margin: -1px 37px 0 auto; }
.log { height: 1660px; overflow: hidden; padding-left: 25px; position: relative; flex: none; }
.log::before { content: ""; position: absolute; left: 60px; right: 10px; top: 0; height: 28px; background: radial-gradient(farthest-side at 50% 0, rgba(0,0,0,.24), rgba(0,0,0,0)); }
article { display: flex; }
article:first-child { margin-top: -16.500px; }
article .avatar { margin-top: 11px; }
.body { margin-left: 14px; padding-bottom: 19px; white-space: nowrap; }
.who { height: 44px; display: flex; align-items: center; line-height: 44px; color: #06172a; font-size: 24.500px; }
.who b { font-weight: 600; }
.who time { margin-left: 14px; font-size: 20px; color: #8b9aa8; position: relative; top: 4px; }
.body p span { display: block; height: 42px; line-height: 42px; font-size: 25.050px; color: #4e5a66; }
.body p + p { margin-top: 9.600px; }
.compose { display: flex; align-items: center; margin: 30px 0 0 26px; height: 114px; }
.input { width: 553px; height: 114px; border: 4px solid #a7b1bd; border-radius: 7px; padding: 19px 0 0 26px; overflow: hidden; }
.input span { display: block; font-size: 25.050px; line-height: 42px; color: #a0a8af; white-space: nowrap; }
.compose button { width: 69px; height: 69px; border-radius: 50%; background: #2f6fd0; margin-left: 19px; }

.stage { flex: 1; min-width: 0; background: #071627; position: relative; display: flex; flex-direction: column; }
.stage-head { height: 106px; flex: none; display: flex; align-items: center; padding: 8px 53px 0 33px; }
.toggle, .camera svg, .expand svg { fill: none; stroke: #fff; stroke-width: 2; }
.title { display: flex; align-items: center; color: #d8dde2; font-weight: 300; font-size: 25px; margin-left: 530px; white-space: nowrap; }
.title span { padding-bottom: 3px; }
.title i { width: 1.500px; height: 28px; background: #4e5a66; margin: 4px 32px 0 30px; }
.title svg { position: relative; top: -4px; }
.timer { margin-left: 21px; }
.more { margin-left: auto; }
.talking { width: 345px; height: 44px; border-radius: 22px; margin-left: 31px; background: #20437b; display: flex; align-items: center; padding-left: 12px; color: #7d8998; font-size: 25px; white-space: nowrap; flex: none; }
.talking span { padding-bottom: 3px; }
.talking i { width: 26px; height: 28px; border-radius: 50%; background: #215054; margin-right: 15px; }
.board { margin: 226px 0 0 3px; height: 1186px; background: #fff; position: relative; flex: none; overflow: hidden; }
.strokes path { fill: none; stroke: #000; stroke-width: 3.700px; vector-effect: non-scaling-stroke; stroke-linecap: round; stroke-linejoin: round; }
.strokes path.red { stroke: #ee3124; }
.script text { font-family: Lato, "DejaVu Sans", sans-serif; font-style: italic; font-weight: 400; fill: #000; }
.script text.red { fill: #ee3124; }
.minimize { position: absolute; right: 0; top: 0; width: 74px; height: 50px; border-radius: 5px 0 0 5px; background: #2f6fd0; }
.minimize i { width: 18px; height: 2px; background: #fff; }
.expand { position: absolute; right: 0; bottom: 0; width: 48px; height: 47px; background: #b2b2b2; }
.controls { display: flex; gap: 42px; margin: 230px 0 0 748px; }
.controls button { width: 84px; height: 84px; border-radius: 50%; color: #fff; box-shadow: 0 3px 5px rgba(0,0,0,.4); }
.audio { background: #2f6fd0; }
.camera { border: 6px solid #fff; background: transparent; }
.camera svg { stroke-linejoin: round; stroke-linecap: round; }
.home-bar { position: absolute; left: 1021px; top: 2022px; width: 690px; height: 11px; border-radius: 6px; background: linear-gradient(90deg, #b9b9b9, #fff 60px); }
</style>
